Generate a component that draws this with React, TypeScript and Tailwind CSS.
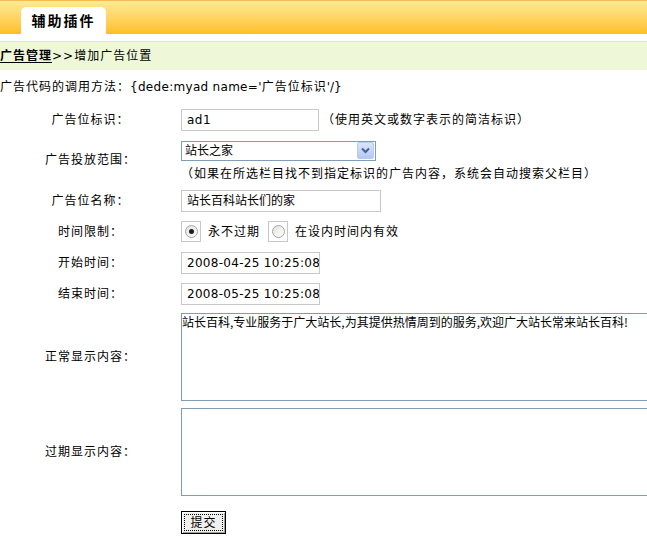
const font = { cjk: "font-['DejaVu_Sans','Noto_Sans_CJK_SC',sans-serif]" };

function Radio({ checked, label }: { checked?: boolean; label: string }) {
  return (
    <label className="flex items-center">
      <span className="flex h-[21px] w-[20px] items-center justify-center border border-[#c8c8c8] bg-white">
        <span className="flex h-[13px] w-[13px] items-center justify-center rounded-full border border-[#a4a4a4] bg-gradient-to-br from-[#e2e2dc] to-white">
          {checked && <span className="h-[5px] w-[5px] rounded-full bg-[#1d1d1d]" />}
        </span>
      </span>
      <span className="ml-[7px] tracking-[1px]">{label}</span>
    </label>
  );
}

function Row({ label, h, children }: { label: string; h: string; children: React.ReactNode }) {
  return (
    <div className={`flex items-center ${h}`}>
      <div className="w-[181px] shrink-0 text-center tracking-[1px]">{label}</div>
      <div className="flex-1">{children}</div>
    </div>
  );
}

export default function App() {
  return (
    <div className={`h-[542px] w-[647px] overflow-hidden bg-white text-[12px] leading-none text-black ${font.cjk}`}>
      {/* Header */}
      <div className="flex h-[34px] items-end border-t border-[#f2bb55] bg-gradient-to-b from-[#ffea92] to-[#ffbf1c] pl-[21px]">
        <div className="flex h-[27px] w-[85px] items-center justify-center rounded-t-[5px] bg-white text-[14px] font-bold tracking-[2px]">
          辅助插件
        </div>
      </div>

      {/* Breadcrumb */}
      <div className="mt-[7px] flex h-[29px] items-center border-t border-[#dcefbd] bg-[#eef8d8] tracking-[1px]">
        <a className="font-bold underline underline-offset-2">广告管理</a>
        <span>&gt;&gt;增加广告位置</span>
      </div>

      {/* Usage */}
      <div className="flex h-[34px] items-center">
        <span className="tracking-[1px]">广告代码的调用方法：</span>
        <span className="tracking-[0.3px]">{"{dede:myad name='"}</span>
        <span className="tracking-[1px]">广告位标识</span>
        <span>{"'/}"}</span>
      </div>

      <Row label="广告位标识：" h="h-[31px]">
        <div className="flex items-center">
          <div className="flex h-[22px] w-[138px] items-center border border-[#c8c8c8] pl-[5px] tracking-[0.5px]">ad1</div>
          <span className="ml-[3px] tracking-[1px]">（使用英文或数字表示的简洁标识）</span>
        </div>
      </Row>

      <Row label="广告投放范围：" h="h-[50px]">
        <div className="flex flex-col gap-[7px]">
          <div className="flex h-[20px] w-[195px] items-center justify-between border border-[#7f9db9] pl-[3px] pr-px">
            <span>站长之家</span>
            <span className="flex h-[17px] w-[17px] items-center justify-center rounded-[2px] border border-[#b9cbf3] bg-gradient-to-b from-[#d8e4fd] to-[#b4c8f8]">
              <svg width="9" height="7" viewBox="0 0 9 7">
                <path d="M1 1.5 L4.5 5 L8 1.5" stroke="#4d6185" strokeWidth="2" fill="none" />
              </svg>
            </span>
          </div>
          <span className="tracking-[1px]">（如果在所选栏目找不到指定标识的广告内容，系统会自动搜索父栏目）</span>
        </div>
      </Row>

      <Row label="广告位名称：" h="h-[31px]">
        <div className="flex h-[22px] w-[200px] items-center border border-[#c8c8c8] pl-[5px]">站长百科站长们的家</div>
      </Row>

      <Row label="时间限制：" h="h-[31px]">
        <div className="flex items-center gap-[8px]">
          <Radio checked label="永不过期" />
          <Radio label="在设内时间内有效" />
        </div>
      </Row>

      <Row label="开始时间：" h="h-[31px]">
        <div className="flex h-[22px] w-[139px] items-center overflow-hidden whitespace-nowrap border border-[#c8c8c8] pl-[5px] tracking-[0.3px]">
          2008-04-25 10:25:08
        </div>
      </Row>

      <Row label="结束时间：" h="h-[31px]">
        <div className="flex h-[22px] w-[139px] items-center overflow-hidden whitespace-nowrap border border-[#c8c8c8] pl-[5px] tracking-[0.3px]">
          2008-05-25 10:25:08
        </div>
      </Row>

      <Row label="正常显示内容：" h="h-[96px]">
        <div className="h-[88px] w-[520px] border border-[#7f9db9] pt-px font-['Noto_Sans_CJK_SC',sans-serif] leading-[14px]">
          站长百科,专业服务于广大站长,为其提供热情周到的服务,欢迎广大站长常来站长百科!
        </div>
      </Row>

      <Row label="过期显示内容：" h="h-[93px]">
        <div className="h-[88px] w-[520px] border border-[#7f9db9]" />
      </Row>

      <div className="flex pl-[181px] pt-[13px]">
        <button className="flex h-[23px] w-[45px] items-center justify-center border border-black bg-[#f0f0ee] p-[2px] shadow-[inset_1px_1px_0_#fff,inset_-1px_-1px_0_#a0a0a0]">
          <span className="flex h-full w-full items-center justify-center border border-dotted border-black tracking-[1px]">提交</span>
        </button>
      </div>
    </div>
  );
}
